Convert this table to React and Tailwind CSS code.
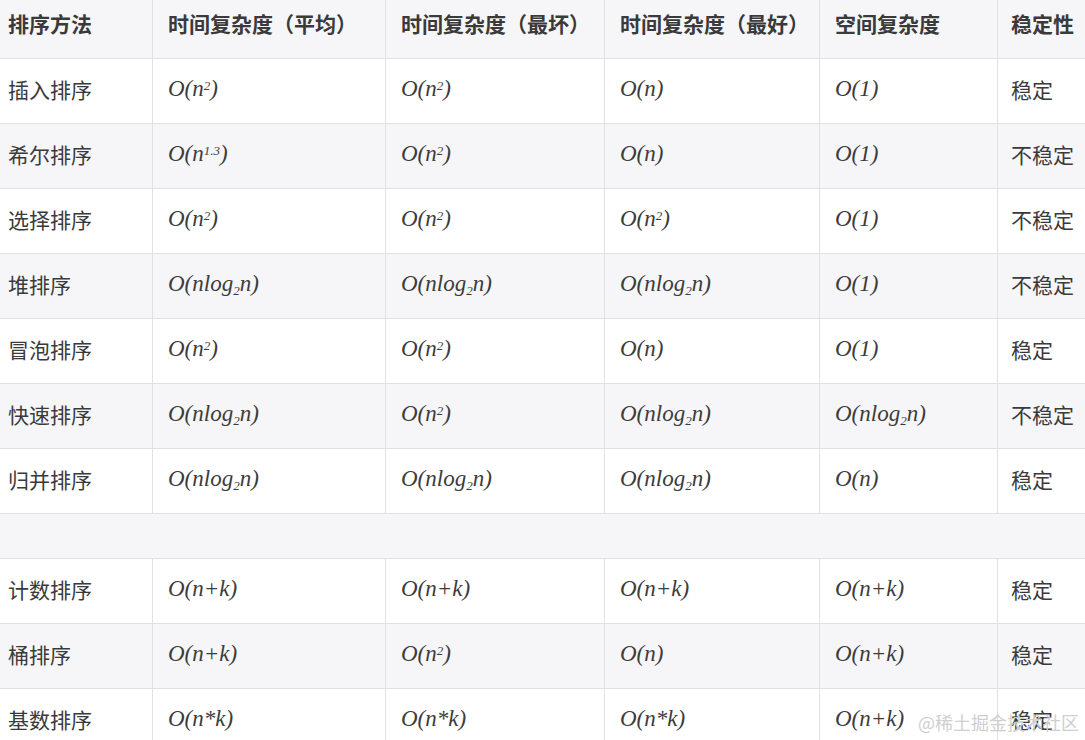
import React from "react";

const cjk = "font-['Noto_Sans_CJK_SC','Noto_Sans',sans-serif]";
const serif = "font-['Liberation_Serif','Times_New_Roman',serif] italic";

const Sup = ({ c }) => <sup className="text-[13px] italic">{c}</sup>;
const Sub = ({ c }) => <sub className="text-[13px] italic">{c}</sub>;

const M = ({ t }) => {
  const map = {
    n2: (
      <>
        O(n<Sup c="2" />)
      </>
    ),
    n13: (
      <>
        O(n<Sup c="1.3" />)
      </>
    ),
    n: <>O(n)</>,
    one: <>O(1)</>,
    nlog: (
      <>
        O(nlog<Sub c="2" />n)
      </>
    ),
    nk: <>O(n+k)</>,
    nmk: <>O(n*k)</>,
  };
  return <span className={`${serif} text-[23px] text-[#3c3c3c]`}>{map[t]}</span>;
};

const rows = [
  ["插入排序", "n2", "n2", "n", "one", "稳定"],
  ["希尔排序", "n13", "n2", "n", "one", "不稳定"],
  ["选择排序", "n2", "n2", "n2", "one", "不稳定"],
  ["堆排序", "nlog", "nlog", "nlog", "one", "不稳定"],
  ["冒泡排序", "n2", "n2", "n", "one", "稳定"],
  ["快速排序", "nlog", "n2", "nlog", "nlog", "不稳定"],
  ["归并排序", "nlog", "nlog", "nlog", "n", "稳定"],
];
const rows2 = [
  ["计数排序", "nk", "nk", "nk", "nk", "稳定"],
  ["桶排序", "nk", "n2", "n", "nk", "稳定"],
  ["基数排序", "nmk", "nmk", "nmk", "nk", "稳定"],
];

const widths = ["w-[153px] pl-2", "w-[233px] pl-[15px]", "w-[219px] pl-[15px]", "w-[215px] pl-[15px]", "w-[178px] pl-[15px]", "flex-1 pl-[13px]"];
const bd = "border-[#e1e1e4]";

const Row = ({ r, gray }) => (
  <div className={`flex h-[65px] border-b ${bd} ${gray ? "bg-[#f6f6f8]" : "bg-white"}`}>
    {r.map((c, i) => (
      <div
        key={i}
        className={`${widths[i]} shrink-0 flex items-center pb-[3px] ${i < 5 ? `border-r ${bd}` : ""}`}
      >
        {i === 0 || i === 5 ? (
          <span className={`${cjk} text-[21px] text-[#3a3a3a]`}>{c}</span>
        ) : (
          <M t={c} />
        )}
      </div>
    ))}
  </div>
);

export default function App() {
  const head = ["排序方法", "时间复杂度（平均）", "时间复杂度（最坏）", "时间复杂度（最好）", "空间复杂度", "稳定性"];
  return (
    <div className="relative w-[1085px] h-[740px] overflow-hidden bg-white">
      <div className={`flex h-[59px] border-b ${bd} bg-[#f6f6f8]`}>
        {head.map((c, i) => (
          <div
            key={i}
            className={`${widths[i]} shrink-0 flex items-center pb-[10px] ${i < 5 ? `border-r ${bd}` : ""}`}
          >
            <span className={`${cjk} text-[21px] font-bold text-[#3a3a3a] whitespace-nowrap`}>{c}</span>
          </div>
        ))}
      </div>
      {rows.map((r, i) => (
        <Row key={i} r={r} gray={i % 2 === 1} />
      ))}
      <div className={`h-[45px] border-b ${bd} bg-[#f6f6f8]`} />
      {rows2.map((r, i) => (
        <Row key={i} r={r} gray={i % 2 === 1} />
      ))}
      <div className={`absolute left-[918px] top-[709px] ${cjk} text-[18px] text-[#cfcfcf] whitespace-nowrap`}>
        @稀土掘金技术社区
      </div>
    </div>
  );
}
